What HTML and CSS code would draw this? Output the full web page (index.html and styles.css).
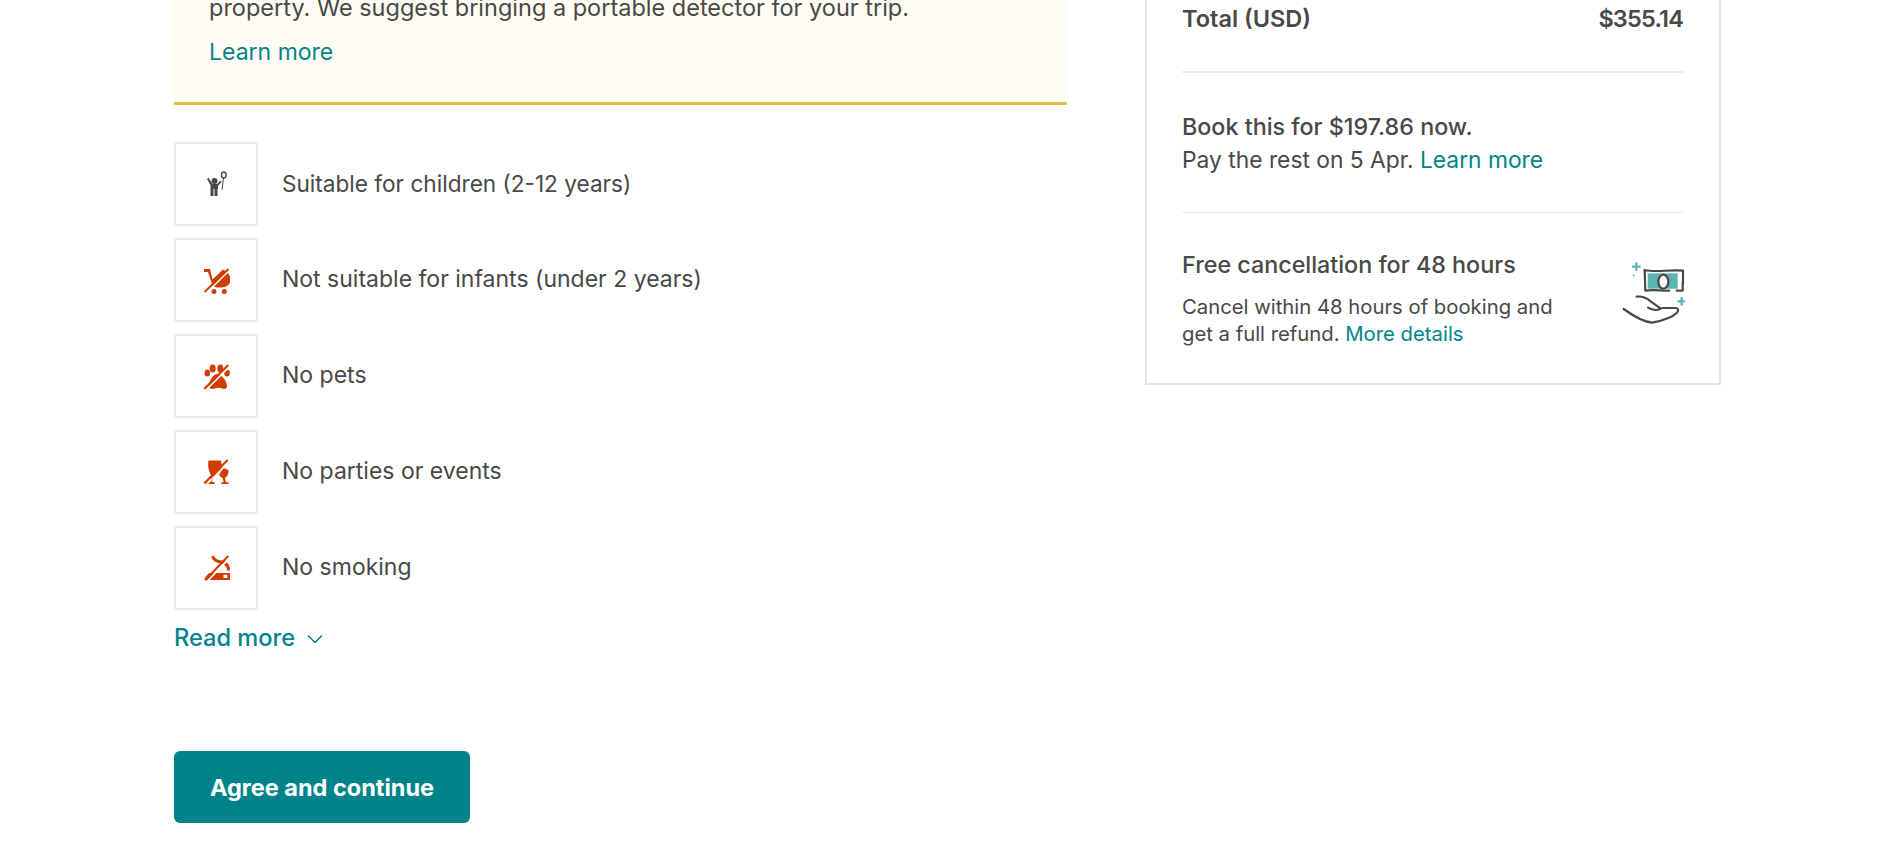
FILE: index.html
```html
<!DOCTYPE html>
<html lang="en">
<head>
    <meta charset="UTF-8">
    <meta name="viewport" content="width=device-width, initial-scale=1.0">
    <link rel="stylesheet" href="styles.css">
    <title>Review house rules</title>
</head>
<body>

<div class="page">
    <div class="left-col">
        <div class="notice">
            <p>property. We suggest bringing a portable detector for your trip.</p>
            <a class="link notice-link" href="#">Learn more</a>
        </div>

        <div class="rules">
            <div class="rule">
                <div class="rule-box">
                    <svg class="rule-icon" viewBox="0 0 28 28" fill="#484848">
                        <circle cx="12.500" cy="11" r="3"/>
                        <path d="M5 9l1.500-1.200 4 6.200h4.500l3.500-3.500 1.200 1.200-3.700 4.300v3h-.5V26h-3v-7h-1v7H8.500V15z"/>
                        <ellipse cx="21.800" cy="5" rx="2.300" ry="3" fill="none" stroke="#484848" stroke-width="1.400"/>
                        <path d="M21.500 8l-1.500 12" fill="none" stroke="#484848" stroke-width="1"/>
                    </svg>
                </div>
                <span class="rule-narrow">Suitable for children (2-12 years)</span>
            </div>
            <div class="rule">
                <div class="rule-box">
                    <svg class="rule-icon" viewBox="0 0 28 28" fill="#cf3d00">
                        <path d="M2 3h6l2.500 10.500L21 3.500c4 1.500 7.500 5.500 7.500 10.500 0 4.500-4 7.500-9 7.500h-3.500c-3.500 0-6-2-7-6.500L6 6H2z"/>
                        <circle cx="12" cy="25.500" r="2.500"/>
                        <circle cx="22.300" cy="25.500" r="2.500"/>
                        <path class="slash-gap" d="M4.500 27L27.500 4"/>
                        <path class="slash" d="M2.500 26L26.500 3"/>
                    </svg>
                </div>
                <span>Not suitable for infants (under 2 years)</span>
            </div>
            <div class="rule">
                <div class="rule-box">
                    <svg class="rule-icon" viewBox="0 0 28 28" fill="#cf3d00">
                        <ellipse cx="5.300" cy="11" rx="2.800" ry="3.500"/>
                        <ellipse cx="10.700" cy="6.500" rx="3" ry="4"/>
                        <ellipse cx="18.300" cy="6.500" rx="3" ry="4"/>
                        <ellipse cx="25" cy="11" rx="2.800" ry="3.500"/>
                        <path d="M15 12c4 0 10 7 10 12 0 3-3 3.500-5 2.500-2.500-1-5-1-7.500 0-2 1-5.500.5-5.500-2.500C7 19 11 12 15 12z"/>
                        <path class="slash-gap" d="M4 28L27.500 4.500"/>
                        <path class="slash" d="M2.300 27L26.300 3"/>
                    </svg>
                </div>
                <span>No pets</span>
            </div>
            <div class="rule">
                <div class="rule-box">
                    <svg class="rule-icon" viewBox="0 0 28 28" fill="#cf3d00">
                        <path d="M6.500 2.500H19l1 6c.5 4-3 8-7 9.500l-3.500 6h3v2H4V24h3.500l2-6C6.500 14 5.500 7 6.500 2.500z"/>
                        <path d="M21 10l5.500 2c.5 3-1 6.500-3.500 8l1 4.200h2.500v1.800h-7v-1.800h2.200l-1-4.200c-1.500-.5-3-1.500-3.500-3z"/>
                        <path class="slash-gap" d="M4 27L27.500 3.500"/>
                        <path class="slash" d="M2.300 25.300L25.700 2"/>
                    </svg>
                </div>
                <span>No parties or events</span>
            </div>
            <div class="rule">
                <div class="rule-box">
                    <svg class="rule-icon" viewBox="0 0 28 28" fill="#cf3d00">
                        <path d="M3 26v-2.500l4-4.500h21v7z"/>
                        <rect x="21.500" y="20.800" width="3.800" height="3.200" fill="#fff"/>
                        <path d="M9 3l2.500-1.500c1.500 3 4 4.500 8 5 5 .7 8.500 3 8.500 10h-3c0-4-2-6-6.500-7C14 9 11 7 9 3z"/>
                        <path class="slash-gap" d="M5 27.500L27.500 4"/>
                        <path class="slash" d="M3 26.300L26.300 2"/>
                    </svg>
                </div>
                <span>No smoking</span>
            </div>
        </div>

        <a class="link read-more" href="#">
            Read more
            <svg class="chevron" viewBox="0 0 16 10" fill="none" stroke="#008489" stroke-width="1.500">
                <path d="M1 1.500l7 7 7-7"/>
            </svg>
        </a>

        <button class="agree-btn">Agree and continue</button>
    </div>

    <div class="summary-card">
        <div class="total-row">
            <span>Total (USD)</span>
            <span class="total-price">$355.14</span>
        </div>
        <div class="pay-section">
            <div class="pay-title">Book this for $197.86 now.</div>
            <div>Pay the rest on 5 Apr. <a class="link" href="#">Learn more</a></div>
        </div>
        <div class="cancel-section">
            <div class="cancel-text">
                <div class="cancel-title">Free cancellation for 48 hours</div>
                <div class="cancel-desc">Cancel within 48 hours of booking and get a full refund. <a class="link" href="#">More details</a></div>
            </div>
            <svg class="refund-icon" viewBox="60 30 192 192" fill="none" stroke="#484848" stroke-width="6.500" stroke-linecap="round" stroke-linejoin="round">
                <rect x="140" y="70" width="90" height="46" fill="#5cb5b3" stroke="none"/>
                <ellipse cx="187" cy="95" rx="15" ry="21" fill="#fff" stroke="#484848"/>
                <path d="M130 60c35 8 75-2 116 2v42M131 60l2 62c28-5 50 2 72 0M245 98v24h-18"/>
                <path d="M68 177c25 18 55 38 85 41 25-5 60-15 75-30 6-8 4-14-4-14h-40M107 140c15-2 30 4 42 14l30 22c-10 5-25 5-38-3"/>
                <path d="M106 40v20M96 50h20M242 144v20M232 154h20" stroke="#5cb5b3" stroke-width="7"/>
                <circle cx="98" cy="76" r="3" fill="#5cb5b3" stroke="none"/>
            </svg>
        </div>
    </div>
</div>

</body>
</html>
```

FILE: styles.css
```css
html, body {
    height: 100%;
}

body {
    margin: 0;
    overflow: hidden;
    background: #fff;
    color: #484848;
    font-family: Inter, "Liberation Sans", sans-serif;
    font-size: 23px;
}

/* the shot is scrolled, so the top of both columns sits above the window */
.page {
    display: flex;
    gap: 78px;
    margin-top: -7px;
    padding-left: 174px;
}

.left-col {
    width: 893px;
}

.link {
    color: #008489;
    text-decoration: none;
}

.notice {
    padding: 0 35px 35px;
    background: #fffcf3;
    border-bottom: 3px solid #e4c04a;
}

.notice p {
    margin: 0 0 14px;
    font-size: 23.5px;
    line-height: 30px;
}

.notice-link {
    display: block;
    line-height: 30px;
}

.rules {
    display: flex;
    flex-direction: column;
    gap: 12px;
    margin-top: 37px;
}

.rule {
    display: flex;
    align-items: center;
    gap: 24px;
}

.rule span {
    padding-bottom: 2px;
}

.rule .rule-narrow {
    font-size: 22.6px;
}

.rule-box {
    display: flex;
    justify-content: center;
    align-items: center;
    width: 84px;
    height: 84px;
    box-sizing: border-box;
    border: 2px solid #ebebeb;
    border-radius: 3px;
}

.rule-icon {
    width: 28px;
    height: 28px;
}

.slash {
    stroke: #cf3d00;
    stroke-width: 2;
    fill: none;
}

.slash-gap {
    stroke: #fff;
    stroke-width: 1.600;
    fill: none;
}

.read-more {
    display: flex;
    align-items: center;
    gap: 12px;
    margin-top: 13px;
    font-size: 23.6px;
    font-weight: 500;
    line-height: 30px;
}

.chevron {
    width: 16px;
    height: 10px;
    margin-top: 2px;
}

.agree-btn {
    display: block;
    width: 296px;
    height: 72px;
    margin-top: 98px;
    border: none;
    border-radius: 6px;
    background: #008489;
    color: #fff;
    font-family: inherit;
    font-size: 23.500px;
    font-weight: 700;
}

.summary-card {
    width: 576px;
    height: 392px;
    box-sizing: border-box;
    padding: 9px 36px 0 35px;
    border: 2px solid #e4e4e4;
}

.total-row {
    display: flex;
    justify-content: space-between;
    padding-bottom: 37px;
    border-bottom: 2px solid #ebebeb;
    font-size: 23.500px;
    font-weight: 600;
    line-height: 30px;
}

.total-price {
    letter-spacing: -0.8px;
}

.pay-section {
    padding: 37px 0 36px;
    border-bottom: 1px solid #ebebeb;
    font-size: 22.8px;
    line-height: 33px;
}

.pay-title {
    font-size: 23.3px;
    font-weight: 500;
}

.cancel-section {
    display: flex;
    justify-content: space-between;
    align-items: flex-start;
    padding-top: 36px;
}

.cancel-text {
    width: 375px;
}

.cancel-title {
    margin-bottom: 12px;
    font-size: 23.3px;
    font-weight: 500;
    line-height: 32px;
}

.cancel-desc {
    font-size: 20.300px;
    line-height: 27px;
}

.refund-icon {
    width: 64px;
    height: 64px;
    margin: 11px -2px 0 0;
}
```
